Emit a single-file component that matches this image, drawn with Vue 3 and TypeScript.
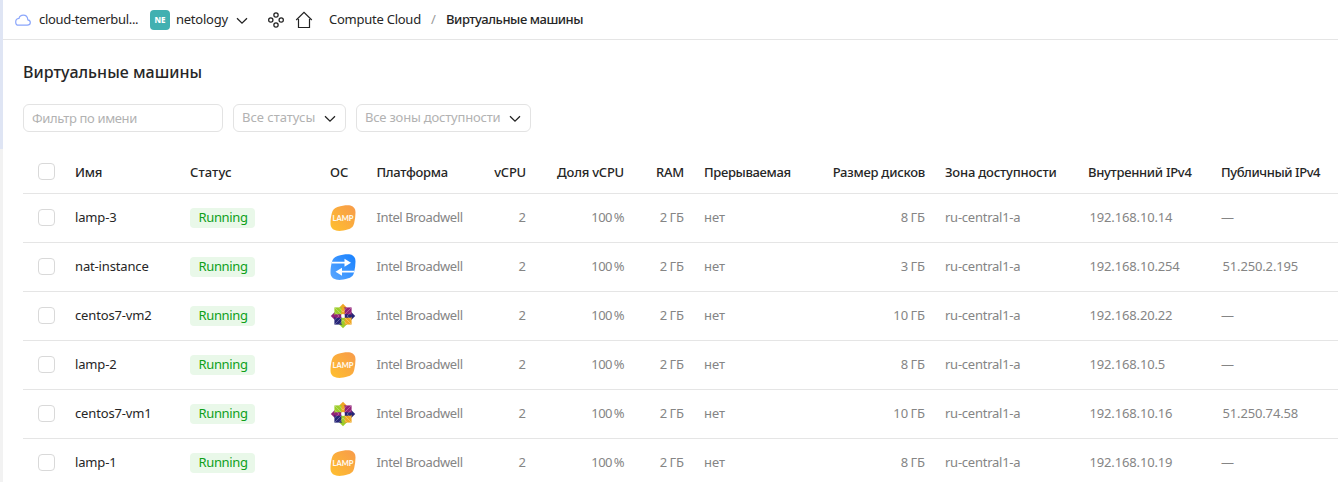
<script setup lang="ts">
interface Vm {
  name: string
  os: 'lamp' | 'nat' | 'centos'
  disk: string
  ip: string
  publicIp: string
}

const vms: Vm[] = [
  { name: 'lamp-3', os: 'lamp', disk: '8 ГБ', ip: '192.168.10.14', publicIp: '' },
  { name: 'nat-instance', os: 'nat', disk: '3 ГБ', ip: '192.168.10.254', publicIp: '51.250.2.195' },
  { name: 'centos7-vm2', os: 'centos', disk: '10 ГБ', ip: '192.168.20.22', publicIp: '' },
  { name: 'lamp-2', os: 'lamp', disk: '8 ГБ', ip: '192.168.10.5', publicIp: '' },
  { name: 'centos7-vm1', os: 'centos', disk: '10 ГБ', ip: '192.168.10.16', publicIp: '51.250.74.58' },
  { name: 'lamp-1', os: 'lamp', disk: '8 ГБ', ip: '192.168.10.19', publicIp: '' },
]
</script>

<template>
  <div class="app">
    <div class="rail"></div>
    <main class="main">
      <header class="topbar">
        <svg class="cloud" width="16" height="16" viewBox="0 0 16 16" fill="none" stroke="#8ba6fb" stroke-width="1.2">
          <path d="M3.6 13.2h8.6c1.9 0 3.1-1.2 3.1-2.7 0-1.4-1-2.5-2.5-2.7C12.6 5 10.800 3.100 8.300 3.100 6.200 3.100 4.500 4.400 4 6.400 2 6.600.7 8 .7 9.900c0 1.900 1.300 3.300 2.900 3.300z" />
        </svg>
        <span class="cloud-name">cloud-temerbul...</span>
        <span class="folder-badge">NE</span>
        <span class="folder-name">netology</span>
        <svg class="chev top-chev" width="12" height="8" viewBox="0 0 12 8"><path d="M1 1.200l5 5 5-5" /></svg>
        <svg class="services" width="18" height="18" viewBox="0 0 18 18" fill="none" stroke="#222" stroke-width="1.250">
          <circle cx="9" cy="4" r="2.150" /><circle cx="3.800" cy="9" r="2.150" />
          <circle cx="14.200" cy="9" r="2.150" /><circle cx="9" cy="14" r="2.150" />
        </svg>
        <svg class="home" width="18" height="18" viewBox="0 0 18 18" fill="none" stroke="#222" stroke-width="1.200">
          <path d="M1.200 9L9 1.400 16.800 9M3.500 8v8.500h11V8" />
        </svg>
        <span class="crumb">Compute Cloud</span>
        <span class="slash">/</span>
        <span class="current">Виртуальные машины</span>
      </header>

      <h1>Виртуальные машины</h1>

      <div class="filters">
        <div class="field name-field"><span class="f-name">Фильтр по имени</span></div>
        <div class="field status-field">
          <span class="f-status">Все статусы</span>
          <svg class="chev" width="12" height="8" viewBox="0 0 12 8"><path d="M1 1.200l5 5 5-5" /></svg>
        </div>
        <div class="field zone-field">
          <span class="f-zone">Все зоны доступности</span>
          <svg class="chev" width="12" height="8" viewBox="0 0 12 8"><path d="M1 1.200l5 5 5-5" /></svg>
        </div>
      </div>

      <section class="table">
        <div class="row head">
          <span class="check"><i></i></span>
          <span>Имя</span>
          <span class="h-status">Статус</span>
          <span class="h-os">ОС</span>
          <span class="h-platform">Платформа</span>
          <span class="num">vCPU</span>
          <span class="num">Доля vCPU</span>
          <span class="num">RAM</span>
          <span class="pad h-preempt">Прерываемая</span>
          <span class="num h-disk">Размер дисков</span>
          <span class="pad h-zone">Зона доступности</span>
          <span class="pad h-int">Внутренний IPv4</span>
          <span class="pad h-pub">Публичный IPv4</span>
        </div>
        <div v-for="vm in vms" :key="vm.name" class="row">
          <span class="check"><i></i></span>
          <span class="name">{{ vm.name }}</span>
          <span class="cell-status"><b class="status">Running</b></span>
          <span class="os">
            <svg v-if="vm.os === 'lamp'" width="26" height="26" viewBox="0 0 26 26">
              <defs>
                <linearGradient id="lampFill" x1="0" y1="1" x2="1" y2="0">
                  <stop offset="0" stop-color="#ffc02e" /><stop offset="1" stop-color="#f79a4b" />
                </linearGradient>
              </defs>
              <path fill="url(#lampFill)" d="M7.500 2C13 .2 17.500-.2 20.500.5 24 1.300 25.600 4 25.500 7.500 25.500 11 25 14.500 24.200 18c-.9 3.800-2.700 5.300-6 6.300-4.200 1.300-8.200 2-11.200 1.500C2.500 25 .4 22.500.5 18.300.5 15 1 11.500 1.800 8.300 2.700 4.900 4.300 3 7.500 2z" />
              <text x="13" y="15.800" text-anchor="middle" textLength="21" lengthAdjust="spacingAndGlyphs" font-size="7.500" font-weight="900" fill="#fff" fill-opacity=".92" font-family="Lato, sans-serif">LAMP</text>
            </svg>
            <svg v-else-if="vm.os === 'nat'" width="26" height="26" viewBox="0 0 26 26">
              <defs>
                <linearGradient id="natFill" x1="0" y1="1" x2="1" y2="0">
                  <stop offset="0" stop-color="#5ca8ff" /><stop offset="1" stop-color="#1680ff" />
                </linearGradient>
              </defs>
              <path fill="url(#natFill)" d="M7.500 2C13 .2 17.500-.2 20.500.5 24 1.300 25.600 4 25.500 7.500 25.500 11 25 14.500 24.200 18c-.9 3.800-2.700 5.300-6 6.300-4.200 1.300-8.200 2-11.200 1.500C2.500 25 .4 22.500.5 18.300.5 15 1 11.500 1.800 8.300 2.700 4.900 4.300 3 7.500 2z" />
              <path fill="#fff" d="M2 7.800h12.500V4.700l6.500 4-6.500 4V9.600H1.500zM24.500 16.700H12v-3l-6.500 4 6.500 4v-3.200h12z" />
            </svg>
            <svg v-else width="26" height="26" viewBox="0 0 26 26">
              <path fill="#efa724" d="M13 .8l4 4v4H9v-4z" />
              <path fill="#262577" d="M25.200 13l-4 4h-4V9h4z" />
              <path fill="#9ccd2a" d="M13 25.200l-4-4v-4h8v4z" />
              <path fill="#932279" d="M.8 13l4-4h4v8h-4z" />
              <path fill="#9ccd2a" d="M4.400 4.400h8.200v8.200H4.400z" />
              <path fill="#932279" d="M13.400 4.400h8.200v8.200h-8.200z" />
              <path fill="#efa724" d="M13.400 13.400h8.200v8.200h-8.200z" />
              <path fill="#262577" d="M4.400 13.400h8.200v8.200H4.400z" />
              <path fill="#efa724" d="M13 3.500l1.700 2V11L13 12l-1.700-1V5.500z" />
              <path fill="#262577" d="M22.500 13l-2 1.700H15L14 13l1-1.700h5.500z" />
              <path fill="#9ccd2a" d="M13 22.500l-1.700-2V15l1.700-1 1.700 1v5.500z" />
              <path fill="#932279" d="M3.500 13l2-1.700H11l1 1.700-1 1.700H5.500z" />
              <path d="M5 5l16 16M21 5L5 21M9 4.500L13 9l4-4.500M9 21.500l4-4.500 4 4.500M4.500 9L9 13l-4.500 4M21.500 9L17 13l4.500 4" fill="none" stroke="#fff" stroke-opacity=".4" stroke-width=".7" />
              <circle cx="13" cy="13" r="1.900" fill="#fff" />
            </svg>
          </span>
          <span class="platform">Intel Broadwell</span>
          <span class="num">2</span>
          <span class="num share">100 %</span>
          <span class="num size">2 ГБ</span>
          <span class="pad">нет</span>
          <span class="num size">{{ vm.disk }}</span>
          <span class="pad zone">ru-central1-a</span>
          <span class="pad ip">{{ vm.ip }}</span>
          <span v-if="vm.publicIp" class="pad ip">{{ vm.publicIp }}</span>
          <span v-else class="pad dash">—</span>
        </div>
      </section>
    </main>
  </div>
</template>

<style>
body { margin: 0; overflow: hidden; background: #fff; }
</style>

<style scoped>
.app { display: flex; width: 1338px; height: 482px; overflow: hidden; font: 13px/18px "Noto Sans", sans-serif; color: #262626; }
.rail { flex: none; width: 3px; background: linear-gradient(#dfe5f4 0 149px, #f2f2f2 149px); }
.main { flex: 1; min-width: 0; background: #fff; }
.topbar { box-sizing: border-box; display: flex; align-items: center; height: 40px; padding-left: 12px; border-bottom: 1px solid #e5e5e5; white-space: nowrap; }
.topbar > span { padding-bottom: 2px; }
svg { display: block; flex: none; }
.cloud-name { width: 103px; margin-left: 8px; letter-spacing: -.3px; }
.topbar > .folder-badge { width: 20px; height: 20px; margin: 1px 6px 0 8px; padding: 0; border-radius: 4px; background: #41b0b1; color: #fff; font-size: 8px; font-weight: 800; line-height: 20px; text-align: center; }
.folder-name { width: 52px; letter-spacing: -.25px; }
.chev { fill: none; stroke: #222; stroke-width: 1.25; }
.top-chev { margin: 2px 19px 0 8px; }
.home { margin-left: 10px; }
.crumb { width: 92px; margin-left: 16px; letter-spacing: -.25px; }
.slash { width: 5px; margin: 0 10px 0 10px; color: #999; }
.current { font-weight: 500; letter-spacing: -.45px; }
h1 { margin: 20px 0 0 20px; font-size: 16px; line-height: 24px; font-weight: 500; letter-spacing: .03px; }
.filters { display: flex; gap: 10px; margin: 20px 0 0 20px; }
.field { box-sizing: border-box; display: flex; align-items: center; justify-content: space-between; height: 28px; padding: 0 9px 0 8px; border: 1px solid #e3e3e3; border-radius: 6px; color: #b2b2b2; white-space: nowrap; }
.name-field { width: 200px; }
.status-field { width: 113px; }
.zone-field { width: 175px; }
.f-name { letter-spacing: -.35px; }
.f-status, .f-zone { padding-bottom: 2px; }
.f-zone { letter-spacing: -.2px; }
.field .chev { margin-top: 2px; }
.table { margin: 20px 0 0 20px; }
.row { box-sizing: border-box; display: grid; grid-template-columns: 52px 115px 140px 46.500px 100px 49.500px 98px 60px 116px 125px 143px 133px 137px; align-items: center; height: 49px; padding-bottom: 2px; border-bottom: 1px solid #e5e5e5; color: #858585; white-space: nowrap; }
.head { height: 42px; padding-bottom: 1px; color: #262626; font-weight: 500; letter-spacing: -.22px; }
.check i { display: block; box-sizing: border-box; width: 17px; height: 17px; margin-left: 15px; border: 1px solid #d9d9d9; border-radius: 4px; }
.head .check { padding-bottom: 2px; }
.name { color: #262626; letter-spacing: -.15px; }
.cell-status, .os { position: relative; top: 1px; }
.status { display: block; box-sizing: border-box; width: 65px; height: 20px; padding-left: 8.5px; border-radius: 4px; background: #e9f8e9; color: #0ea01a; font-weight: 400; line-height: 18px; letter-spacing: -.35px; }
.num { text-align: right; }
.pad { padding-left: 20px; }
.h-status { letter-spacing: .1px; }
.h-os { letter-spacing: 0; }
.h-platform { letter-spacing: -.32px; }
.h-disk { letter-spacing: -.24px; }
.h-preempt { letter-spacing: -.35px; }
.h-zone { letter-spacing: -.2px; }
.h-int { letter-spacing: -.3px; }
.h-pub { letter-spacing: -.43px; }
.platform { letter-spacing: -.4px; }
.share { word-spacing: -1.2px; letter-spacing: -.5px; }
.size { word-spacing: -1.2px; }
.zone { letter-spacing: -.25px; }
.ip { padding-left: 21.5px; letter-spacing: -.15px; }
.dash { letter-spacing: 0; }
</style>
